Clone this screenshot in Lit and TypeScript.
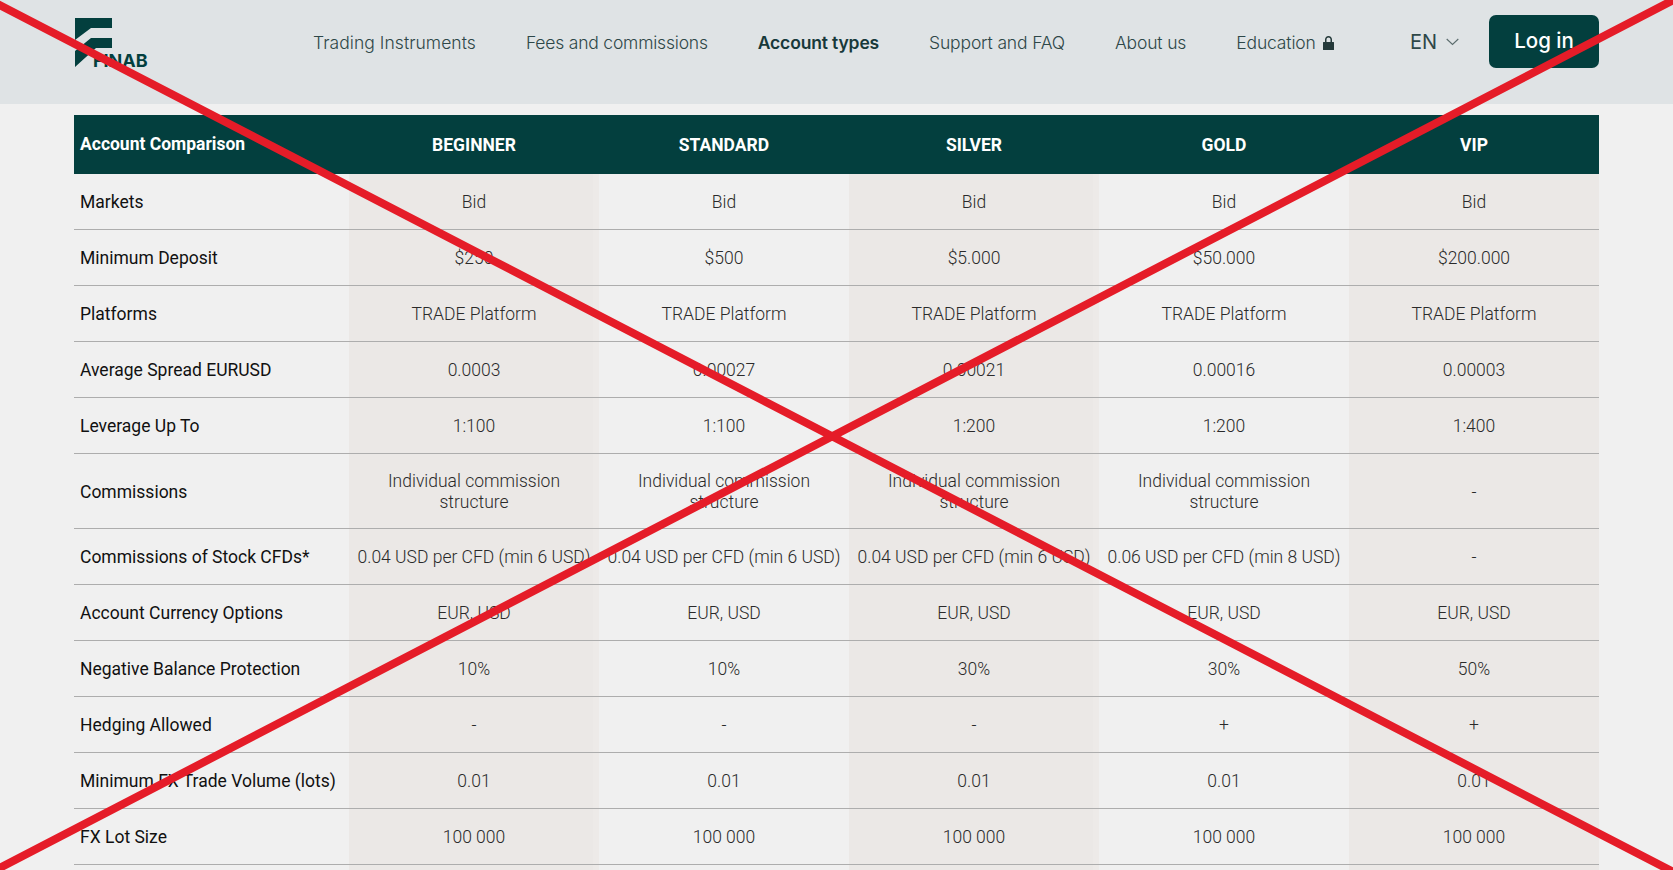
import { LitElement, html, css } from "lit";
import { customElement } from "lit/decorators.js";

const NAV = ["Trading Instruments", "Fees and commissions", "Account types", "Support and FAQ", "About us"];
const COLS = ["BEGINNER", "STANDARD", "SILVER", "GOLD", "VIP"];
const ICS = "Individual commission structure";
const ROWS: [string, string[]][] = [
  ["Markets", ["Bid", "Bid", "Bid", "Bid", "Bid"]],
  ["Minimum Deposit", ["$250", "$500", "$5.000", "$50.000", "$200.000"]],
  ["Platforms", Array(5).fill("TRADE Platform")],
  ["Average Spread EURUSD", ["0.0003", "0.00027", "0.00021", "0.00016", "0.00003"]],
  ["Leverage Up To", ["1:100", "1:100", "1:200", "1:200", "1:400"]],
  ["Commissions", [ICS, ICS, ICS, ICS, "-"]],
  ["Commissions of Stock CFDs*", ["0.04 USD per CFD (min 6 USD)", "0.04 USD per CFD (min 6 USD)", "0.04 USD per CFD (min 6 USD)", "0.06 USD per CFD (min 8 USD)", "-"]],
  ["Account Currency Options", Array(5).fill("EUR, USD")],
  ["Negative Balance Protection", ["10%", "10%", "30%", "30%", "50%"]],
  ["Hedging Allowed", ["-", "-", "-", "+", "+"]],
  ["Minimum FX Trade Volume (lots)", Array(5).fill("0.01")],
  ["FX Lot Size", Array(5).fill("100 000")],
  ["", ["", "", "", "", ""]],
];

@customElement("app-root")
export class AppRoot extends LitElement {
  static styles = css`
    :host { display: block; position: relative; height: 870px; overflow: hidden; background: #f0f0f0; font-family: Roboto, "Liberation Sans", sans-serif; }
    header { height: 104px; background: #dfe3e5; display: flex; align-items: center; padding: 0 74px; box-sizing: border-box; }
    .logo { position: relative; width: 74px; height: 49px; margin-top: -20px; flex: none; }
    .logo svg { display: block; }
    .logo span { position: absolute; left: 19px; top: 33px; font: 700 18px/20px Inter, sans-serif; color: #033f3e; }
    nav { display: flex; align-items: center; gap: 50px; margin-left: 165px; margin-top: -18px; font: 300 17.5px/24px Inter, sans-serif; letter-spacing: -0.1px; color: #2e4748; white-space: nowrap; }
    nav span:nth-child(1) { letter-spacing: 0.05px; }
    nav span:nth-child(2) { letter-spacing: -0.2px; }
    nav span:nth-child(n+4) { letter-spacing: -0.15px; }
    nav .on { font-weight: 600; color: #17393a; letter-spacing: -0.15px; }
    .edu { display: flex; align-items: center; gap: 7px; }
    .lang { margin-left: auto; margin-top: -20px; display: flex; align-items: center; gap: 9px; font: 400 20px/24px Inter, sans-serif; color: #2e4748; }
    .login { margin-left: 30px; margin-top: -21px; width: 110px; height: 53px; border-radius: 7px; background: #033f3e; color: #fff; font: 500 20.5px/51px Inter, sans-serif; text-align: center; }
    main { padding: 11px 74px 0; }
    table { width: 1525px; border-collapse: collapse; table-layout: fixed; }
    th { background: #033f3e; color: #fff; height: 57px; padding: 0; font-size: 17.5px; font-weight: 700; text-align: center; }
    th:first-child { text-align: left; padding: 0 0 2px 6px; width: 269px; }
    td { height: 56px; padding: 3px 0 0; box-sizing: border-box; border-bottom: 1px solid #adadad; text-align: center; font-size: 17.5px; font-weight: 300; line-height: 21px; color: #2a2a2a; }
    tbody tr:first-child td { height: 55px; }
    td:first-child { text-align: left; padding-left: 6px; font-weight: 400; color: #111; }
    tr.tall td { height: 75px; }
    td.wrap { padding: 3px 30px 0; }
    td:nth-child(2), td:nth-child(4), td:nth-child(6) { background: #ebe8e6; }
    td:nth-child(2), td:nth-child(4) { background: linear-gradient(to right, #ebe8e6 97.500%, #edeae8 97.500%); }
    .x { position: absolute; inset: 0; pointer-events: none; }
  `;

  render() {
    return html`
      <header>
        <div class="logo">
          <svg width="38" height="49" viewBox="0 0 38 49">
            <path fill="#033f3e" d="M1 0H38V10H17L1 22ZM38 20H17L1 33V49L22 30H38Z"/>
          </svg>
          <span>FINAB</span>
        </div>
        <nav>
          ${NAV.map((n) => html`<span class=${n === "Account types" ? "on" : ""}>${n}</span>`)}
          <span class="edu">Education
            <svg width="11" height="14" viewBox="0 0 11 14"><path fill="#24393a" fill-rule="evenodd" d="M2 6V3.6C2 1.6 3.5 0 5.5 0S9 1.6 9 3.6V6H10.5A.5.5 0 0 1 11 6.5V13.5A.5.5 0 0 1 10.500 14H.5A.5.5 0 0 1 0 13.500V6.500A.5.500 0 0 1 .5 6ZM3.500 6H7.500V3.600C7.500 2.400 6.600 1.500 5.500 1.500S3.500 2.400 3.500 3.600Z"/></svg>
          </span>
        </nav>
        <div class="lang">EN
          <svg width="13" height="8" viewBox="0 0 13 8"><path fill="none" stroke="#5b6c6d" stroke-width="1.100" d="M.7 1 6.500 6.500 12.300 1"/></svg>
        </div>
        <div class="login">Log in</div>
      </header>
      <main>
        <table>
          <thead><tr><th>Account Comparison</th>${COLS.map((c) => html`<th>${c}</th>`)}</tr></thead>
          <tbody>
            ${ROWS.map(([label, vals]) => html`
              <tr class=${label === "Commissions" ? "tall" : ""}>
                <td>${label}</td>
                ${vals.map((v) => html`<td class=${v === ICS ? "wrap" : ""}>${v}</td>`)}
              </tr>`)}
          </tbody>
        </table>
      </main>
      <svg class="x" width="1673" height="870" viewBox="0 0 1673 870">
        <path stroke="#e51c28" stroke-width="8" fill="none" d="M-10 0 1683 877M-10 873 1683 -5"/>
      </svg>
    `;
  }
}
